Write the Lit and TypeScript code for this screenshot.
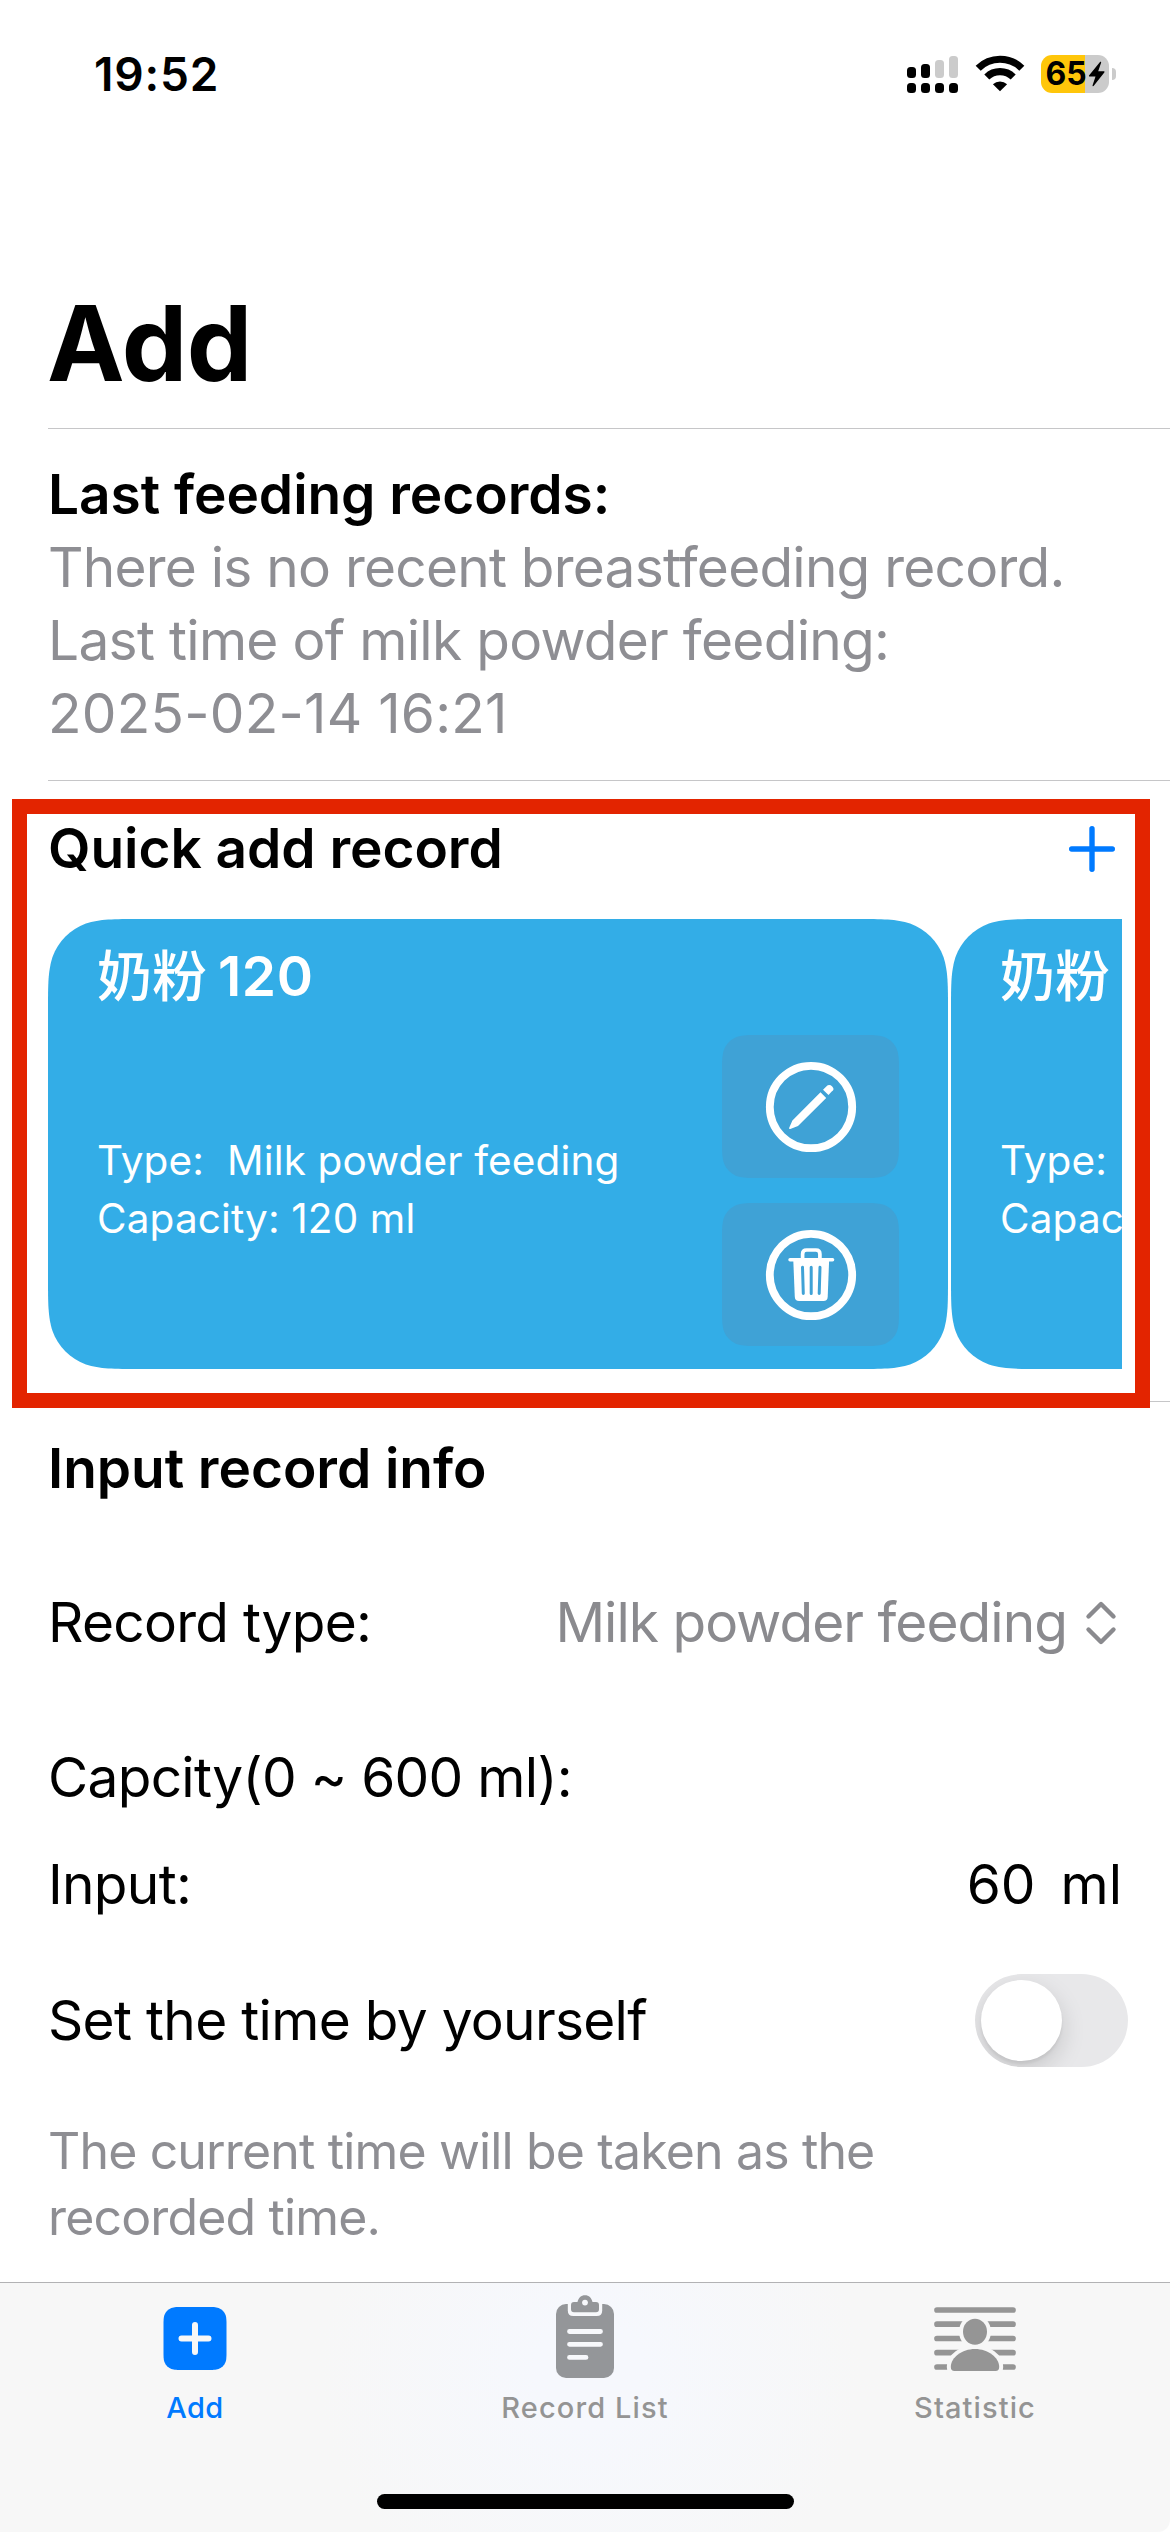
import { LitElement, html, css, unsafeCSS } from "lit";
import { customElement } from "lit/decorators.js";

/** Rounded rectangle with continuous (squircle) corners. */
function squircle(w: number, h: number, r: number): string {
  const a = 1.52866 * r, b = 1.08849 * r, c = 0.86841 * r, d = 0.63149 * r;
  const e = 0.07491 * r, f = 0.37282 * r, g = 0.16906 * r;
  return [
    `M${a} 0`,
    `H${w - a}`,
    `C${w - b} 0 ${w - c} 0 ${w - d} ${e}`,
    `C${w - f} ${g} ${w - g} ${f} ${w - e} ${d}`,
    `C${w} ${c} ${w} ${b} ${w} ${a}`,
    `V${h - a}`,
    `C${w} ${h - b} ${w} ${h - c} ${w - e} ${h - d}`,
    `C${w - g} ${h - f} ${w - f} ${h - g} ${w - d} ${h - e}`,
    `C${w - c} ${h} ${w - b} ${h} ${w - a} ${h}`,
    `H${a}`,
    `C${b} ${h} ${c} ${h} ${d} ${h - e}`,
    `C${f} ${h - g} ${g} ${h - f} ${e} ${h - d}`,
    `C0 ${h - c} 0 ${h - b} 0 ${h - a}`,
    `V${a}`,
    `C0 ${b} 0 ${c} ${e} ${d}`,
    `C${g} ${f} ${f} ${g} ${d} ${e}`,
    `C${c} 0 ${b} 0 ${a} 0Z`,
  ].join(" ");
}

const icons = {
  signal: html`<svg width="52" height="38" viewBox="0 0 52 38">
    <g fill="#000"><rect x="0" y="12" width="9" height="11" rx="3.5"/><rect x="14" y="9" width="9" height="14" rx="3.5"/></g>
    <g fill="#cbcbcb"><rect x="28" y="5" width="9" height="18" rx="3.5"/><rect x="42" y="1" width="9" height="22" rx="3.5"/></g>
    <g fill="#000"><rect x="0" y="28" width="9" height="10" rx="3.5"/><rect x="14" y="28" width="9" height="10" rx="3.5"/><rect x="28" y="28" width="9" height="10" rx="3.5"/><rect x="42" y="28" width="9" height="10" rx="3.5"/></g>
  </svg>`,
  wifi: html`<svg width="50" height="38" viewBox="0 0 50 38">
    <g fill="none" stroke="#000" stroke-width="7.2"><path d="M3.2 13.2A31 31 0 0 1 46.8 13.2"/><path d="M11.8 22A19 19 0 0 1 38.2 22"/></g>
    <path d="M25 36.3 17.9 29.2A10.4 10.4 0 0 1 32.1 29.2Z"/>
  </svg>`,
  bolt: html`<svg class="bolt" width="17" height="26" viewBox="0 0 17 26"><path d="M12 1 1.2 14.2c-.5.7-.2 1.3.6 1.3h5.7L4.6 24.2c-.3 1 .6 1.3 1.2.6L16.3 11.6c.5-.6.2-1.3-.6-1.3H10.2L13.1 1.8C13.4.8 12.6.3 12 1Z"/></svg>`,
  plus: html`<svg width="48" height="48" viewBox="0 0 48 48"><path d="M24 3.7V44.3M3.7 24H44.3" stroke="#007aff" stroke-width="5.4" stroke-linecap="round"/></svg>`,
  pencil: html`<svg width="92" height="92" viewBox="-46 -46 92 92">
    <circle r="41.2" fill="none" stroke="#fff" stroke-width="7.8"/>
    <path fill="#fff" d="M-21.8 20.8-18.6 13.4 9.5-14.7 15.2-9-13 19-20.7 22Q-22.3 22.4-21.8 20.8ZM12-17.3 15.3-20.5Q18.3-23.3 21.2-20.4T20.7-15.4L17.5-12Z"/>
  </svg>`,
  trash: html`<svg width="92" height="92" viewBox="-46 -46 92 92">
    <circle r="41.2" fill="none" stroke="#fff" stroke-width="7.8"/>
    <path d="M-8.4-15V-21Q-8.4-25-4.4-25H4.9Q8.9-25 8.9-21V-15" fill="none" stroke="#fff" stroke-width="3.7"/>
    <path d="M-21-15.3H21.6" stroke="#fff" stroke-width="3.4" stroke-linecap="round"/>
    <path fill="#fff" d="M-17.7-14.3H18.1L16.7 22Q16.5 26 12.5 26H-12Q-16 26-16.2 22Z"/>
    <path d="M-8.5-7.8-7.7 18.5M.2-7.8V18.5M9-7.8 8.2 18.5" stroke="#3fa2d6" stroke-width="3" stroke-linecap="round"/>
  </svg>`,
  chevrons: html`<svg width="32" height="46" viewBox="0 0 32 46"><path d="M3.5 16.5 16 4 28.5 16.5M3.5 29.5 16 42 28.5 29.5" fill="none" stroke="#8a8a8e" stroke-width="4.4" stroke-linecap="round" stroke-linejoin="round"/></svg>`,
  tabAdd: html`<svg width="64" height="86" viewBox="0 0 64 86">
    <path transform="translate(.5 13)" fill="#007aff" d="${squircle(63, 63, 12.5)}"/>
    <path d="M32 31V58M18.5 44.5H45.5" stroke="#f7f7f7" stroke-width="6" stroke-linecap="round"/>
  </svg>`,
  tabList: html`<svg width="60" height="86" viewBox="0 0 60 86">
    <rect x="1" y="10" width="58" height="74" rx="10" fill="#949699"/>
    <path d="M12.8 8V16.5Q12.8 22 18.3 22H41.7Q47.2 22 47.2 16.5V8Z" fill="#f7f8fb"/>
    <path d="M19 8H22.5C23.5 3.8 26 1.2 30 1.2S36.5 3.8 37.5 8H41Q44 8 44 11V15.3Q44 18.3 41 18.3H19Q16 18.3 16 15.3V11Q16 8 19 8Z" fill="#949699"/>
    <circle cx="30" cy="8.6" r="2.9" fill="#f7f8fb"/>
    <path d="M14.5 37.5H45.5M14.5 50.3H45.5M14.5 63.4H31" stroke="#f7f8fb" stroke-width="4.8" stroke-linecap="round"/>
  </svg>`,
  tabStat: html`<svg width="82" height="86" viewBox="0 0 82 86">
    <path d="M3 16H79M3 30.2H79M3 44.5H79M3 58.7H79M3 73H79" stroke="#959595" stroke-width="5.7" stroke-linecap="round"/>
    <g fill="#959595" stroke="#f7f7f7" stroke-width="8">
      <ellipse cx="41" cy="37.7" rx="12" ry="13" paint-order="stroke"/>
      <path paint-order="stroke" d="M20.5 77Q16.8 77 16.8 73C16.8 63.5 28 55 41 55S65.2 63.5 65.2 73Q65.2 77 61.5 77Z"/>
    </g>
  </svg>`,
};

interface QuickRecord { label: string; amount: string; type: string; capacity: string; }

const quickRecords: QuickRecord[] = [
  { label: "奶粉", amount: "120", type: "Milk powder feeding", capacity: "120 ml" },
  { label: "奶粉", amount: "60", type: "Milk powder feeding", capacity: "60 ml" },
];

@customElement("status-bar")
export class StatusBar extends LitElement {
  static styles = css`
    :host { display: flex; height: 148px; align-items: center; justify-content: space-between; padding: 0 54px 0 94px; }
    svg { display: block; }
    .time { font-size: 46px; font-weight: 600; letter-spacing: 0.8px; }
    .right { display: flex; align-items: center; gap: 16px; }
    .battery { display: flex; align-items: center; gap: 3px; }
    .cell { display: flex; align-items: center; justify-content: center; width: 68px; height: 38px; border-radius: 11px;
      background: linear-gradient(90deg, #ffc60a 0 44px, #cbcbcb 44px); }
    .level { font-size: 32px; font-weight: 700; line-height: 38px; }
    .bolt { margin-left: 1px; }
    .nub { width: 4px; height: 12px; border-radius: 0 6px 6px 0; background: #cbcbcb; }
  `;
  render() {
    return html`<span class="time">19:52</span>
      <div class="right">${icons.signal}${icons.wifi}
        <div class="battery"><div class="cell"><span class="level">65</span>${icons.bolt}</div><i class="nub"></i></div>
      </div>`;
  }
}

@customElement("quick-card")
export class QuickCard extends LitElement {
  static properties = { record: { attribute: false } };
  declare record: QuickRecord;
  static styles = css`
    :host { display: flex; flex: none; box-sizing: border-box; width: 900px; height: 450px; padding: 0 49px;
      justify-content: space-between; background: #33ade7; color: #fff;
      clip-path: path("${unsafeCSS(squircle(900, 450, 60))}"); }
    svg { display: block; }
    .text { display: flex; flex-direction: column; white-space: pre; }
    .name { display: flex; align-items: baseline; gap: 11px; height: 73px; margin-top: 21px; line-height: 73px; font-size: 55px; font-weight: 600; }
    .label { font-weight: 500; }
    .amount { letter-spacing: 0.6px; }
    .details { margin-top: 119px; font-size: 40.5px; line-height: 58px; letter-spacing: 0.12px; }
    .actions { display: flex; flex-direction: column; gap: 25px; margin-top: 116px; }
    .action { display: flex; align-items: center; justify-content: center; width: 177px; height: 143px;
      background: #3fa2d6; clip-path: path("${unsafeCSS(squircle(177, 143, 24))}"); }
  `;
  render() {
    const r = this.record;
    return html`<div class="text">
        <div class="name"><span class="label">${r.label}</span><span class="amount">${r.amount}</span></div>
        <div class="details"><div>Type:  ${r.type}</div><div>Capacity: ${r.capacity}</div></div>
      </div>
      <div class="actions"><div class="action">${icons.pencil}</div><div class="action">${icons.trash}</div></div>`;
  }
}

@customElement("app-root")
export class AppRoot extends LitElement {
  static styles = css`
    :host { display: flex; flex-direction: column; box-sizing: border-box; width: 1170px; height: 2532px; overflow: hidden;
      background: #fff; color: #000; font-family: Inter, "Noto Sans CJK SC", sans-serif; position: relative; }
    svg { display: block; }
    .title { margin: 135px 0 25px; padding-left: 47px; font-size: 104px; line-height: 120px; font-weight: 700; letter-spacing: -0.5px; }
    .rule { height: 1px; margin-left: 48px; background: #c6c6c8; flex: none; }
    .section { padding: 0 48px; font-size: 55px; line-height: 73px; letter-spacing: -0.7px; }
    .heading { font-weight: 600; letter-spacing: -0.05px; }
    .secondary { color: #8e8e93; }
    .breast { letter-spacing: -0.77px; }
    .stamp { letter-spacing: 0.25px; }
    .last { padding-top: 29px; padding-bottom: 30px; }
    .quick { padding-top: 31px; padding-bottom: 32px; letter-spacing: 0; }
    .row { display: flex; justify-content: space-between; align-items: center; height: 73px; }
    .quick .row { padding-right: 6px; }
    .cards { display: flex; gap: 3px; margin-top: 34px; height: 450px; overflow: hidden; }
    .form { padding-top: 30px; }
    .type { margin-top: 81px; padding-right: 5px; }
    .picker { display: flex; align-items: center; gap: 18px; color: #8a8a8e; letter-spacing: -0.95px; }
    .capacity { margin-top: 82px; }
    .input { margin-top: 34px; }
    .value { display: flex; gap: 25px; letter-spacing: 0; }
    .manual { margin-top: 63px; }
    .toggle { box-sizing: border-box; width: 153px; height: 93px; margin-right: -6px; padding: 6px; border-radius: 47px; background: #e8e8ea; overflow: hidden; }
    .knob { width: 81px; height: 81px; border-radius: 50%; background: #fff; box-shadow: 0 9px 24px rgba(0,0,0,.15), 0 3px 3px rgba(0,0,0,.06); }
    .note { margin-top: 61px; font-size: 50px; line-height: 66px; letter-spacing: -0.85px; }
    .tabs { display: flex; flex-direction: column; align-items: center; margin-top: auto; height: 249px; border-top: 1px solid #b2b2b4;
      background: radial-gradient(ellipse 270px 260px at 590px 90px, #f6f8fd 20%, #f7f7f7 100%); border-bottom-right-radius: 12px; }
    .tablist { display: flex; align-self: stretch; justify-content: space-around; padding-top: 11px; }
    .tab { display: flex; flex-direction: column; align-items: center; width: 390px; color: #949494; font-size: 29px; font-weight: 500; line-height: 36px; letter-spacing: 1.1px; gap: 10px; }
    .active { color: #007aff; letter-spacing: 0.4px; }
    .home { width: 417px; height: 15px; border-radius: 8px; background: #000; margin-top: 68px; }
    .marker { position: absolute; left: 12px; top: 799px; box-sizing: border-box; width: 1138px; height: 609px; border: 15px solid #e32400; }
  `;
  render() {
    return html`
      <status-bar></status-bar>
      <div class="title">Add</div>
      <div class="rule"></div>
      <div class="section last">
        <div class="heading">Last feeding records:</div>
        <div class="secondary"><span class="breast">There is no recent breastfeeding record.</span><br>Last time of milk powder feeding:<br><span class="stamp">2025-02-14 16:21</span></div>
      </div>
      <div class="rule"></div>
      <div class="section quick">
        <div class="row"><span class="heading">Quick add record</span>${icons.plus}</div>
        <div class="cards">${quickRecords.map((r) => html`<quick-card .record=${r}></quick-card>`)}</div>
      </div>
      <div class="rule"></div>
      <div class="section form">
        <div class="heading">Input record info</div>
        <div class="row type"><span>Record type:</span><span class="picker"><span>Milk powder feeding</span>${icons.chevrons}</span></div>
        <div class="capacity">Capcity(0 ~ 600 ml):</div>
        <div class="row input"><span>Input:</span><span class="value"><span>60</span><span>ml</span></span></div>
        <div class="row manual"><span>Set the time by yourself</span><div class="toggle"><div class="knob"></div></div></div>
        <div class="note secondary">The current time will be taken as the<br>recorded time.</div>
      </div>
      <div class="tabs">
        <div class="tablist">
          <div class="tab active">${icons.tabAdd}<span>Add</span></div>
          <div class="tab">${icons.tabList}<span>Record List</span></div>
          <div class="tab">${icons.tabStat}<span>Statistic</span></div>
        </div>
        <div class="home"></div>
      </div>
      <div class="marker"></div>`;
  }
}
